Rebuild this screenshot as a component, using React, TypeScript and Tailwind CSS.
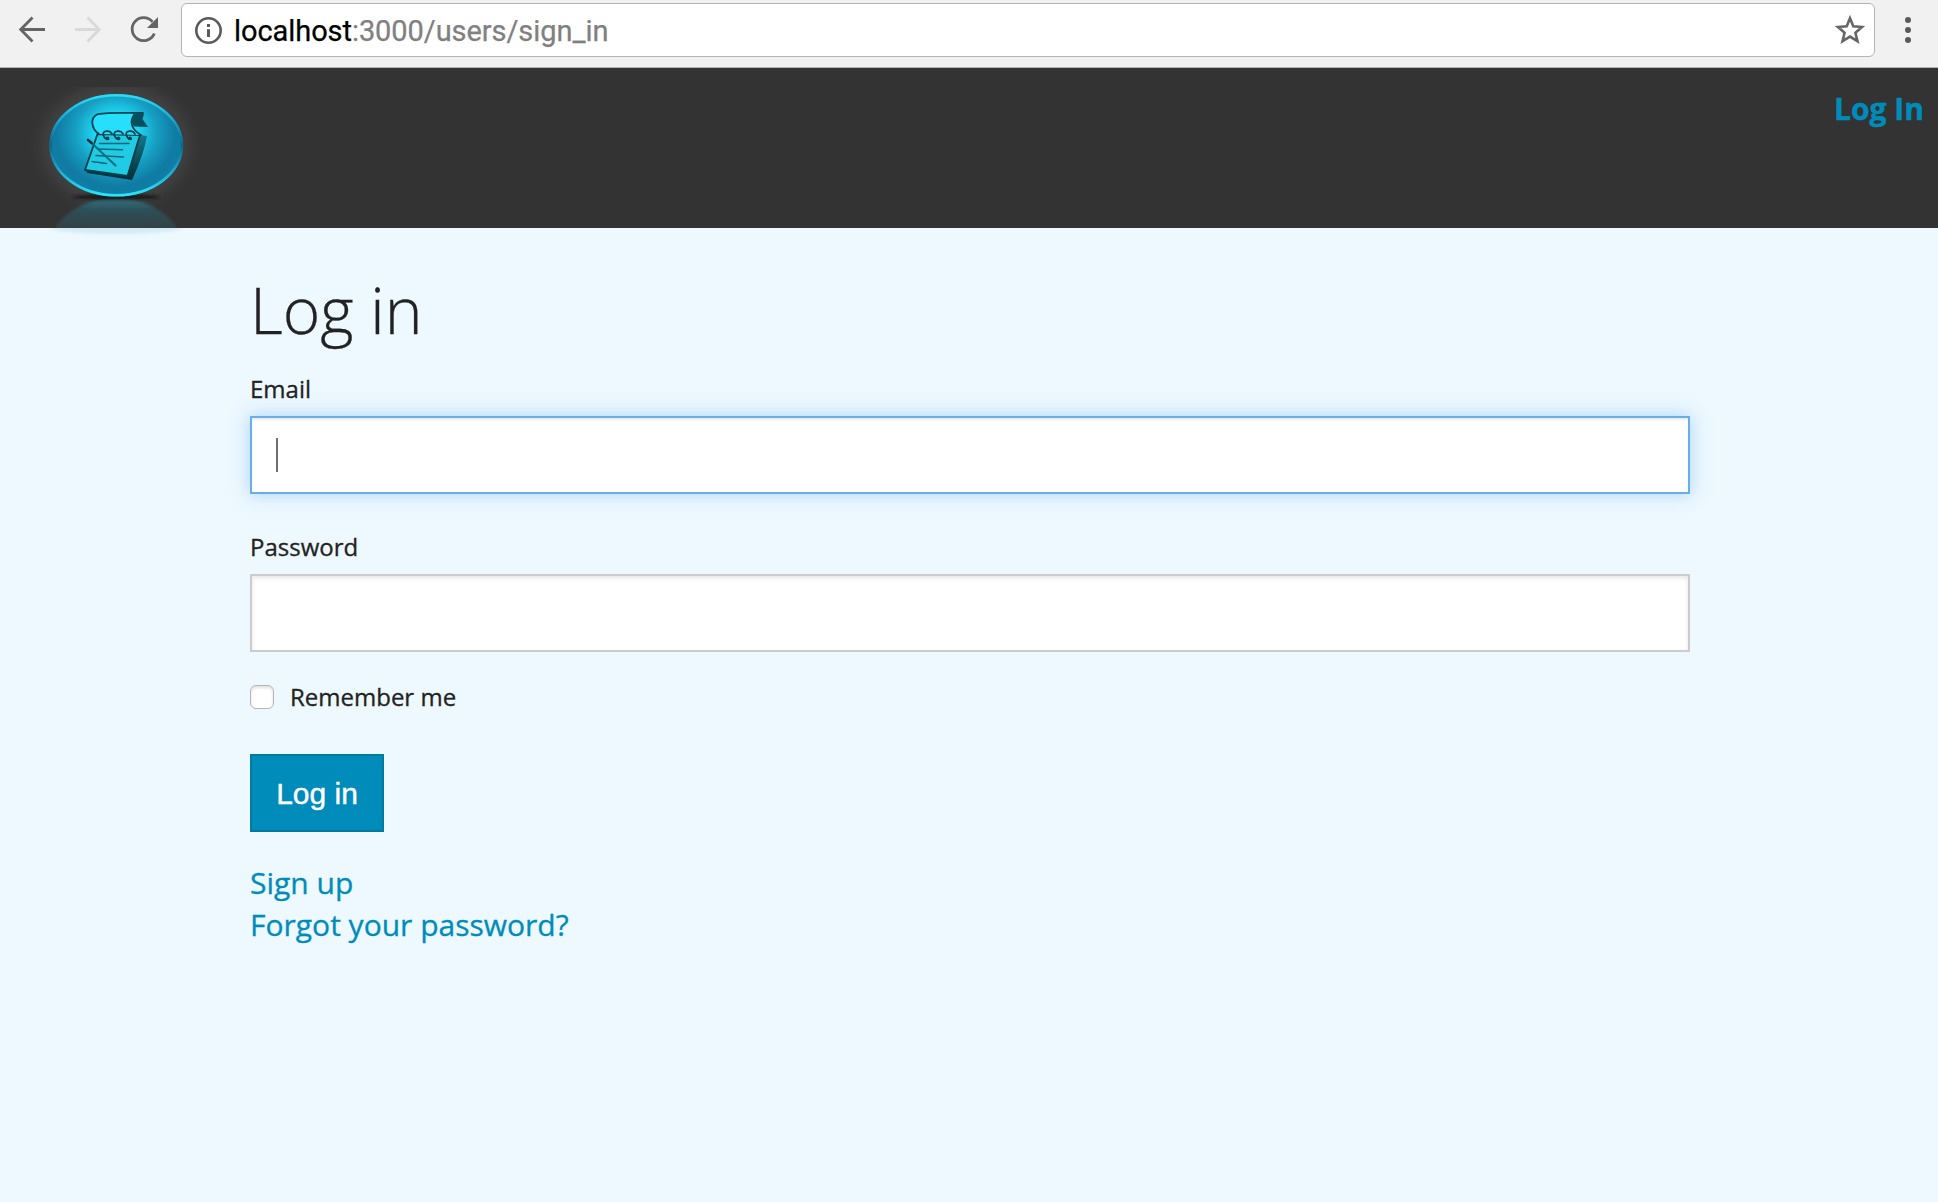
function Logo() {
  return (
    <svg viewBox="0 0 180 180" className="size-[180px] shrink-0">
      <defs>
        <radialGradient id="halo">
          <stop offset="0.6" stopColor="#5c5c5c" />
          <stop offset="0.8" stopColor="#4c4c4c" stopOpacity="0.75" />
          <stop offset="1" stopColor="#333333" stopOpacity="0" />
        </radialGradient>
        <radialGradient id="disc" gradientUnits="userSpaceOnUse" cx="86" cy="63" r="70" gradientTransform="translate(0 6) scale(1 0.9)">
          <stop offset="0" stopColor="#2ae4ff" />
          <stop offset="0.3" stopColor="#20d8f5" />
          <stop offset="0.58" stopColor="#169fc2" />
          <stop offset="0.85" stopColor="#107ba3" />
          <stop offset="1" stopColor="#0f7ea6" />
        </radialGradient>
        <linearGradient id="rim" x1="0" y1="0" x2="0" y2="1">
          <stop offset="0" stopColor="#2adcf7" />
          <stop offset="0.25" stopColor="#1ba5cb" />
          <stop offset="0.5" stopColor="#0c668b" />
          <stop offset="0.75" stopColor="#1fa9cf" />
          <stop offset="1" stopColor="#2be4fb" />
        </linearGradient>
        <linearGradient id="mirror" x1="0" y1="0" x2="0" y2="1">
          <stop offset="0" stopColor="#2c7d90" stopOpacity="0.85" />
          <stop offset="0.12" stopColor="#2b5a66" stopOpacity="0.7" />
          <stop offset="0.3" stopColor="#35525a" stopOpacity="0.45" />
        </linearGradient>
        <linearGradient id="edge" x1="0" y1="0" x2="0" y2="1">
          <stop offset="0" stopColor="#14788a" />
          <stop offset="1" stopColor="#032d37" />
        </linearGradient>
        <filter id="soft" x="-20%" y="-50%" width="140%" height="200%"><feGaussianBlur stdDeviation="1.4" /></filter>
        <filter id="rimSoft"><feGaussianBlur stdDeviation="0.7" /></filter>
        <clipPath id="above"><rect x="0" y="17" width="180" height="141" /></clipPath>
        <clipPath id="reflection"><rect x="0" y="129" width="180" height="29" /></clipPath>
        <clipPath id="below"><rect x="0" y="158" width="180" height="20" /></clipPath>
      </defs>
      <g clipPath="url(#above)">
        <ellipse cx="86" cy="75" rx="90" ry="74" fill="url(#halo)" opacity="0.5" />
      </g>
      <g clipPath="url(#reflection)">
        <ellipse cx="86" cy="180" rx="67" ry="52" fill="url(#mirror)" filter="url(#soft)" />
      </g>
      <g clipPath="url(#below)">
        <ellipse cx="86" cy="157" rx="66" ry="7" fill="#b8dcea" opacity="0.45" filter="url(#soft)" />
      </g>
      <ellipse cx="86" cy="127" rx="44" ry="2.6" fill="#161616" filter="url(#soft)" />
      <ellipse cx="86.3" cy="75.3" rx="66.8" ry="51.2" fill="url(#disc)" />
      <ellipse cx="86.3" cy="75.3" rx="65.6" ry="50" fill="none" stroke="url(#rim)" strokeWidth="2.6" filter="url(#rimSoft)" />
      <path d="M110 65 L117 66 Q114 84 102 110 L57 103 L56 100 L97 106 Z" fill="url(#edge)" />
      <path d="M67.5 64 L110 65 L97.5 106 L55 100 Z" fill="#22cbe4" stroke="#043f4c" strokeWidth="1.8" strokeLinejoin="round" />
      <path d="M69 64 C61 59 60 48 67 44.5 C73 42 92 43 113 43 C100 45 98 57 111 65 Z" fill="#28dffb" />
      <path d="M69 64 C61 59 60 48 67 44.5 C73 42 92 43 113 43 M104 45 C99 52 102 60 111 65" fill="none" stroke="#044553" strokeWidth="1.8" strokeLinecap="round" />
      <path d="M104 44 Q110 42 114 44.5 L112.5 49 L118 57 L104 56.5 Q99 50 104 44 Z" fill="#06505e" />
      <g fill="none" stroke="#044452" strokeWidth="1.7" strokeLinecap="round">
        <path d="M73 65 C73 60 80 60 82 64 M73.5 65 C74 68 76 69 78 69" />
        <path d="M84 65 C84 60 91 60 93 64 M84.5 65 C85 68 87 69 89 69" />
        <path d="M96 65 C96 60 103 60 105 64 M96.5 65 C97 68 99 69 101 69" />
      </g>
      <g fill="#044452">
        <circle cx="77.5" cy="68.4" r="1.9" />
        <circle cx="88.5" cy="68.4" r="1.9" />
        <circle cx="100" cy="68.4" r="1.9" />
      </g>
      <g stroke="#06687b" strokeWidth="1.5" strokeLinecap="round">
        <path d="M69.5 73.5 H99 M67.5 79 L92.5 79.8 M66 85.5 L93.5 87 M62 91.5 L76.5 93.5" />
      </g>
      <path d="M60 71.5 L85.5 95.5" stroke="#087084" strokeWidth="2.1" strokeLinecap="round" />
      <path d="M58 70 L61.5 73" stroke="#05303b" strokeWidth="2.6" strokeLinecap="round" />
    </svg>
  );
}

function Toolbar() {
  return (
    <div className="flex h-[68px] items-start border-b border-[#b4b4b4] bg-[#f1f1f1]">
      <div className="flex h-[60px] w-[181px] shrink-0 items-center">
        <svg viewBox="0 0 181 60" className="h-[60px] w-[181px]" fill="none" strokeWidth="2.8">
          <path d="M45 29.5 H21 M32.5 17.5 L20.7 29.5 L32.5 41.5" stroke="#646464" />
          <path d="M75 29.5 H99 M87.5 17.5 L99.3 29.5 L87.5 41.5" stroke="#d9d9d9" />
          <path d="M154.3 33.5 A11.5 11.5 0 1 1 152.5 21.8" stroke="#646464" />
          <path d="M158 17 V28 H147 Z" fill="#646464" />
        </svg>
      </div>
      <div className="mt-[3px] flex h-[54px] w-[1694px] shrink-0 items-center rounded-[6px] border border-[#b4b4b4] bg-white pr-[8px] pl-[12px]">
        <svg viewBox="0 0 30 30" className="size-[30px] shrink-0">
          <circle cx="14.5" cy="15.5" r="12.2" fill="none" stroke="#5a5a5a" strokeWidth="2.6" />
          <path d="M13 9 h3 v3 h-3 Z M13 14.2 h3 v7.8 h-3 Z" fill="#5a5a5a" />
        </svg>
        <span className="ml-[10px] flex-1 pt-[2px] font-['Roboto',sans-serif] text-[29px] leading-[52px] tracking-[-0.07px] whitespace-nowrap text-[#808080] [-webkit-text-stroke:0.25px]">
          <span className="text-black">localhost</span>:3000/users/sign_in
        </span>
        <svg viewBox="0 0 32 32" className="size-[32px] shrink-0" fill="none" stroke="#666666" strokeWidth="2.6">
          <path d="M16 4.2 L19.3 12.3 L28 13 L21.4 18.7 L23.5 27.2 L16 22.6 L8.5 27.2 L10.6 18.7 L4 13 L12.7 12.3 Z" />
        </svg>
      </div>
      <div className="flex h-[60px] flex-1 flex-col items-center justify-center gap-[4px] pl-[3px]">
        <span className="size-[6px] rounded-full bg-[#5a5a5a]" />
        <span className="size-[6px] rounded-full bg-[#5a5a5a]" />
        <span className="size-[6px] rounded-full bg-[#5a5a5a]" />
      </div>
    </div>
  );
}

export default function App() {
  return (
    <div className="flex h-[1202px] w-[1938px] flex-col overflow-hidden bg-[#edf8ff] font-['Open_Sans',sans-serif] text-[#222222]">
      <Toolbar />
      <header className="flex h-[160px] shrink-0 items-start justify-between bg-[#333333] pt-[2px] pr-[14px] pl-[30px]">
        <Logo />
        <a className="mt-[18px] text-[30px] leading-[42px] font-bold text-[#008cba] [-webkit-text-stroke:0.5px]">Log In</a>
      </header>
      <main className="relative flex w-[1690px] flex-col items-start pt-[36px] pl-[250px]">
        <h2 className="text-[64px] leading-[91px] font-light [-webkit-text-stroke:0.3px]">Log in</h2>
        <label className="mt-[15px] text-[24px] leading-[38px] [-webkit-text-stroke:0.3px]">Email</label>
        <div className="mt-[8px] flex h-[78px] w-full items-center border-2 border-[#66afe9] bg-white pl-[24px] shadow-[inset_0_2px_2px_rgba(0,0,0,0.075),0_0_16px_rgba(102,175,233,0.5)]">
          <span className="h-[34px] w-[2px] bg-[#707070]" />
        </div>
        <label className="mt-[34px] text-[24px] leading-[38px] [-webkit-text-stroke:0.3px]">Password</label>
        <div className="mt-[8px] h-[78px] w-full border-2 border-[#cccccc] bg-white shadow-[inset_0_2px_4px_rgba(0,0,0,0.1)]" />
        <label className="mt-[25px] flex items-center gap-[16px] text-[24px] leading-[38px] [-webkit-text-stroke:0.3px]">
          <span className="size-[24px] rounded-[6px] border-[1.5px] border-[#b5b5b5] bg-white shadow-[inset_0_2px_3px_rgba(0,0,0,0.12)]" />
          <span className="pt-px">Remember me</span>
        </label>
        <button className="mt-[38px] h-[78px] w-[134px] border-2 border-[#007ba0] bg-[#008cba] font-['Liberation_Sans',sans-serif] text-[30px] text-white [-webkit-text-stroke:0.4px]">
          Log in
        </button>
        <nav className="mt-[30px] flex flex-col text-[30px] leading-[42px] text-[#008cba] [-webkit-text-stroke:0.3px]">
          <a>Sign up</a>
          <a>Forgot your password?</a>
        </nav>
      </main>
    </div>
  );
}
